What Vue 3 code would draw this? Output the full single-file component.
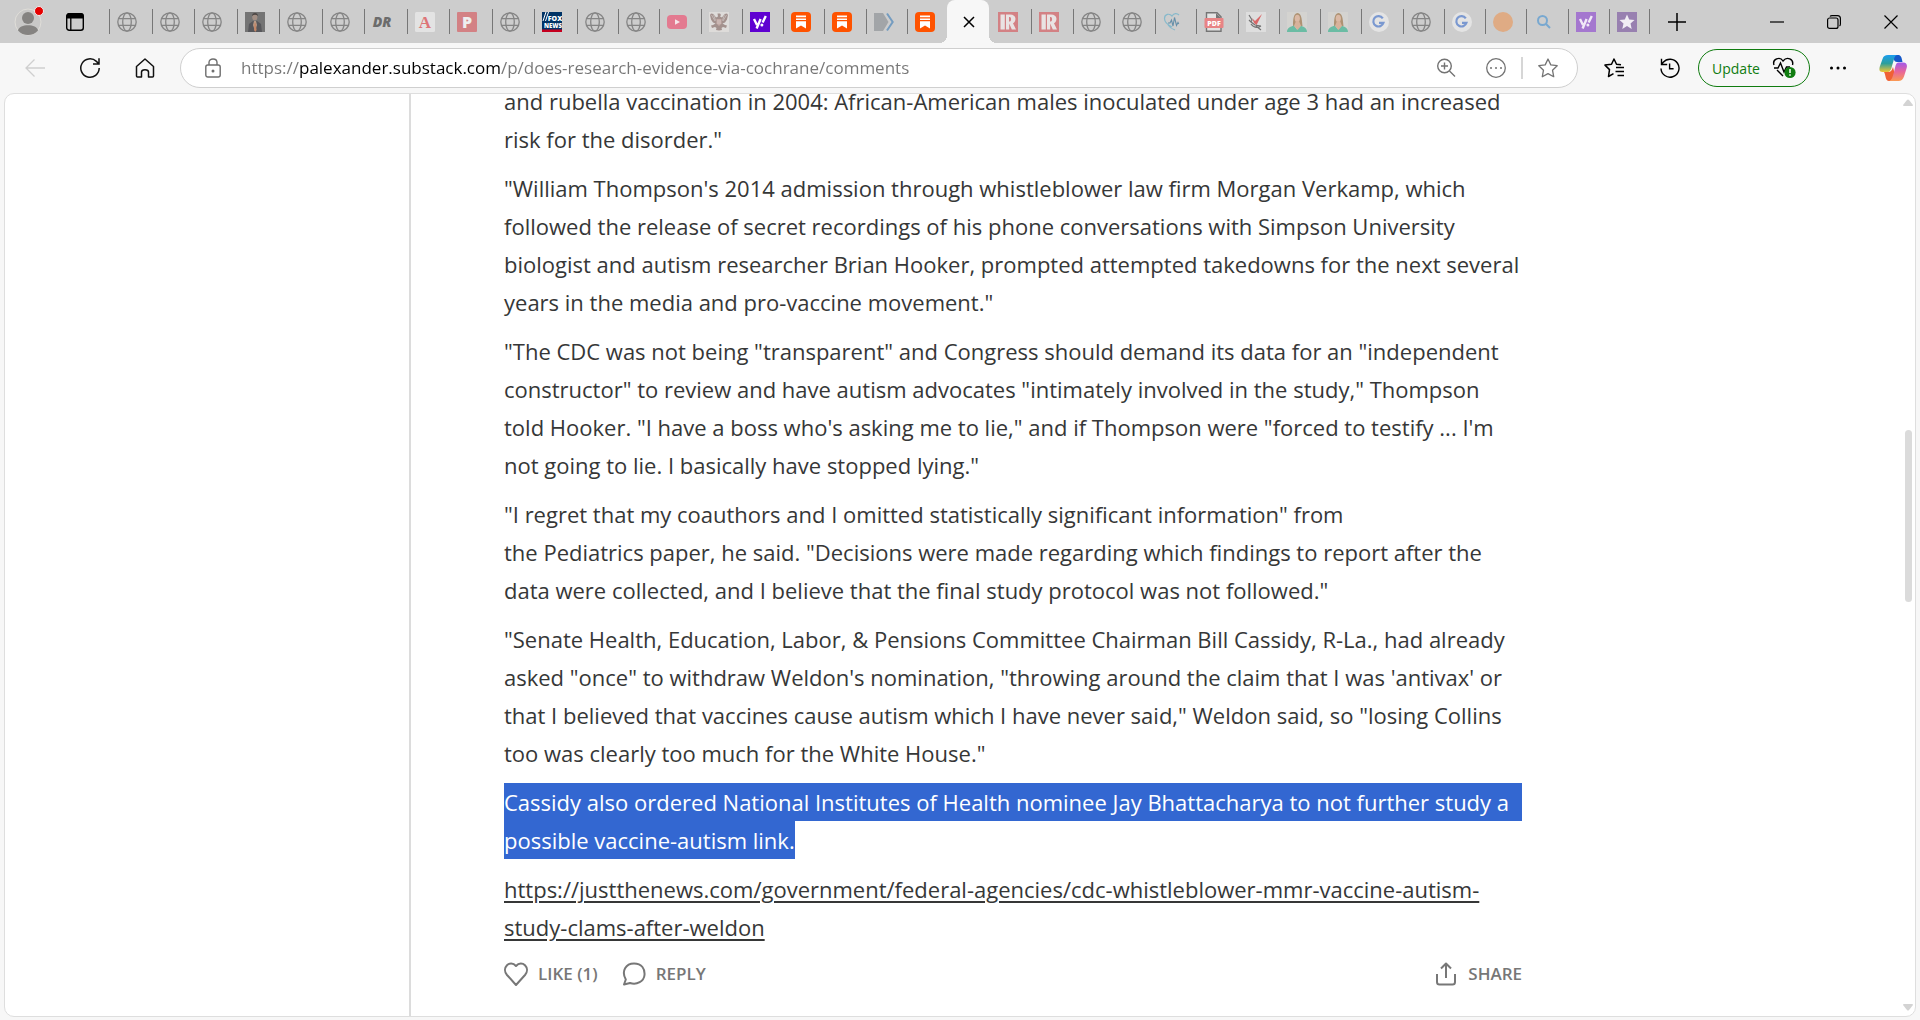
<template>
  <div class="browser">
    <svg class="sprite" aria-hidden="true">
      <symbol id="globe" viewBox="0 0 20 20">
        <g fill="none" stroke="#858585" stroke-width="1.3">
          <circle cx="10" cy="10" r="9.2" />
          <ellipse cx="10" cy="10" rx="4.3" ry="9.2" />
          <path d="M1.6 6.7h16.8M1.6 13.3h16.8" />
        </g>
      </symbol>
      <symbol id="man" viewBox="0 0 20 20">
        <path fill="#747474" d="M0 0h20v20H0z" />
        <path fill="#57575b" d="M3 20l1-8 4-3h4l4 3 1 8z" />
        <path fill="#b99a86" d="M9 9h2l1 4-2 6-2-6z" />
        <path fill="#c38666" d="M9.6 11h1l1 7-1.4 2L9 18z" />
        <ellipse cx="9.8" cy="5" rx="2.6" ry="3.6" fill="#a38f84" />
        <path fill="#4a4543" d="M7 4c0-4 6-4 6 0-2-1.6-4-1.6-6 0z" />
      </symbol>
      <symbol id="letter-a" viewBox="0 0 20 20">
        <rect width="20" height="20" rx="1.5" fill="#e3e3e3" />
      </symbol>
      <symbol id="letter-p" viewBox="0 0 20 20">
        <rect width="20" height="20" rx="1" fill="#d38184" />
      </symbol>
      <symbol id="fox" viewBox="0 0 20 20">
        <path fill="#003366" d="M0 0h20v18H0z" />
        <path fill="#c5001f" d="M0 17.5h20V20H0z" />
        <path stroke="#fff" d="M1 9l3-9M3.500 9l3-9" />
      </symbol>
      <symbol id="youtube" viewBox="0 0 20 20">
        <rect y="3" width="20" height="14" rx="4" fill="#e37a90" />
        <path fill="#f6e6ea" d="M8 7.200v5.600l5-2.800z" />
      </symbol>
      <symbol id="eagle" viewBox="0 0 20 20">
        <path fill="#dedcda" d="M0 0h20v20H0z" />
        <path fill="#a3918d" d="M8.500 1.500H11l1 1.500-1 1.500 2 1L15.500 2 18 1.500l1 1.500-1 4.500-2 3-2.500 1L16 13l2 .5-1 2.500-3-1-1.500 1 .5 2-3 .5-3-.5.5-2L6 15l-3 1-1-2.500 2-.5 2.500-1.500-2.500-1-2-3L1 3l1-1.500L4.500 2 7 5.500l2-1z" />
        <path fill="#c3aaa5" d="M7.500 7h5v4.500L10 14l-2.500-2.500z" />
        <path stroke="#d8d4d1" stroke-width=".6" d="M2.500 3l3.500 6M4.500 2.500l2 6M17.500 3L14 9M15.500 2.500l-2 6M9 8v4M11 8v4" />
      </symbol>
      <symbol id="yahoo" viewBox="0 0 20 20">
        <path fill="#5f01d1" d="M0 0h20v20H0z" />
        <path stroke="#fff" stroke-width="2.400" fill="none" d="M4 7l3 6M10.600 7l-4 9.500M15.800 4l-3.200 6.500" />
        <circle cx="11.900" cy="13" r="1.500" fill="#fff" />
      </symbol>
      <symbol id="yahoo-faded" viewBox="0 0 20 20">
        <path fill="#a477cf" d="M0 0h20v20H0z" />
        <path stroke="#f1e9f7" stroke-width="2.400" fill="none" d="M4 7l3 6M10.600 7l-4 9.500M15.800 4l-3.200 6.500" />
        <circle cx="11.900" cy="13" r="1.500" fill="#f1e9f7" />
      </symbol>
      <symbol id="substack" viewBox="0 0 20 20">
        <rect width="20" height="20" rx="4" fill="#ff5300" />
        <path fill="#fff" d="M5 3.600h10v1.600H5zM5 6.400h10V8H5zM5 9.200h10v7.400l-5-3-5 3z" />
      </symbol>
      <symbol id="chevrons" viewBox="0 0 20 20">
        <path fill="#a2a5a8" d="M0 1h9l5.500 9L9 19H0z" />
        <path fill="none" stroke="#749cc0" stroke-width="2" d="M13 1.500l5.700 8.500-5.700 8.500" />
      </symbol>
      <symbol id="realtor" viewBox="0 0 20 20">
        <path fill="#d38184" d="M0 0h20v20H0z" />
        <path fill="#e9e3e3" d="M2.500 2.500h4.300v15H2.500zM8 2.500h4c7 0 6.500 7.200 3 8.700l3 6.300h-4.200l-2.600-6v6H8z" />
        <path fill="#d38184" d="M11 5h.8c1.700 0 1.700 4.500 0 4.500H11z" />
      </symbol>
      <symbol id="health" viewBox="0 0 20 20">
        <path fill="none" stroke="#86b9cb" stroke-width="1.200" d="M9 15C3 12 1.500 9 1.500 6.500c0-4.500 5-5.500 7.500-2.500 2-3 5-3 7-1M5 13c2 3 4 4 7 5" />
        <path fill="none" stroke="#658fa9" stroke-width="1.100" d="M5 11h2l1.500-3 1.500 6 1.500-8.500 2 8 1.500-3 .8 1.500" />
      </symbol>
      <symbol id="pdf" viewBox="0 0 20 20">
        <path fill="#e4e4e4" stroke="#757575" stroke-width="1.400" d="M2.500.800H13l4 4v14.400H2.500z" />
        <path fill="#757575" d="M12 1v5h5z" />
        <rect x=".5" y="6" width="19" height="10" rx="1" fill="#e88485" />
      </symbol>
      <symbol id="bird" viewBox="0 0 20 20">
        <path fill="#dedede" d="M0 0h20v20H0z" />
        <path fill="#d96667" d="M6 6l3 3 7-7-5.500 11L8 11z" />
        <path fill="none" stroke="#737373" stroke-width="1.200" d="M3 3l3 5-1 2 4 3 6 1M5 12c3 4 7 4 10 2M10 14l5 4M3 8l2 2" />
      </symbol>
      <symbol id="woman" viewBox="0 0 20 20">
        <path fill="#d4d3d0" d="M0 0h20v20H0z" />
        <path fill="#ae9273" d="M6 14c0-4 0-13 4.500-13S15 10 15.500 14z" />
        <path fill="#6bbca4" d="M0 20c0-4 3-5.500 7-6.500l3 4 3-4c4 1 7 2.500 7 6.500z" />
        <ellipse cx="10.300" cy="6.500" rx="2.600" ry="3.700" fill="#dbb9a5" />
        <path fill="#d7b29b" d="M9 9h3l2 5-3.500 4L7 14z" />
      </symbol>
      <symbol id="google" viewBox="0 0 20 20">
        <circle cx="10" cy="10" r="10" fill="#e4e4e4" />
        <path fill="none" stroke="#7a98d0" stroke-width="2.200" d="M13.800 6.300A5.200 5.200 0 1 0 14.500 10.800H10" />
      </symbol>
      <symbol id="dot" viewBox="0 0 20 20"><circle cx="10" cy="10" r="10" fill="#dfab84" /></symbol>
      <symbol id="search" viewBox="0 0 20 20">
        <path fill="none" stroke="#78a8d0" stroke-width="2" d="M12 12l4 4M13 8.500a4.500 4.500 0 1 1-9 0 4.500 4.500 0 0 1 9 0z" />
      </symbol>
      <symbol id="purple-star" viewBox="0 0 20 20">
        <path fill="#9880b0" d="M0 0h20v20H0z" />
        <path fill="#f1edf4" d="M10 2.500l2.200 5 5.300.5-4 3.600 1.200 5.400-4.700-2.900L5.300 17l1.200-5.400-4-3.600 5.300-.5z" />
      </symbol>
    </svg>

    <header class="tabstrip">
      <button type="button" class="profile" aria-label="Profile">
        <svg width="28" height="28" viewBox="0 0 28 28">
          <circle cx="14" cy="14" r="13" fill="#c9c8c7" stroke="#e0ded9" />
          <circle cx="14" cy="10" r="6" fill="#858381" />
          <path fill="#858381" d="M4 22.500c1-7 19-7 20 0-5 6-15 6-20 0z" />
        </svg>
        <span class="profile-dot"></span>
      </button>
      <button type="button" class="workspaces" aria-label="Tab actions">
        <svg width="20" height="20" viewBox="0 0 20 20">
          <rect x="1.700" y="1.700" width="16.600" height="16.600" rx="2.500" fill="none" stroke="#000" stroke-width="1.400" />
          <path d="M1.500 6.500V4a3 3 0 0 1 3-3h11a3 3 0 0 1 3 3v2.500z" />
          <path stroke="#000" stroke-width="1.300" d="M5.800 6v12" />
        </svg>
      </button>

      <nav class="tabs" aria-label="Open tabs">
        <button
          v-for="(tab, i) in tabs"
          :key="i"
          type="button"
          class="tab"
          :class="{ 'tab-wide': i < 11, 'tab-active': tab === 'active', 'tab-plain': tabs[i - 1] === 'active' }"
          :aria-label="tab"
        >
          <svg v-if="tab === 'active'" width="12" height="12" viewBox="0 0 12 12">
            <path stroke="#000" stroke-width="1.500" d="M1 1l10 10M11 1L1 11" />
          </svg>
          <svg v-else class="favicon" width="20" height="20" viewBox="0 0 20 20">
            <use :href="'#' + tab" />
            <text
              v-for="mark in marks[tab]"
              :key="mark.text"
              :x="mark.x"
              :y="mark.y"
              :font-size="mark.size"
              :fill="mark.fill"
              :class="mark.kind"
              text-anchor="middle"
            >{{ mark.text }}</text>
          </svg>
        </button>
      </nav>

      <button type="button" class="new-tab" aria-label="New tab">
        <svg width="18" height="18" viewBox="0 0 18 18"><path stroke="#000" stroke-width="1.500" d="M9 0v18M0 9h18" /></svg>
      </button>
      <div class="window-controls">
        <button type="button" aria-label="Minimize">
          <svg width="14" height="14" viewBox="0 0 14 14"><path stroke="#000" stroke-width="1.200" d="M0 7h14" /></svg>
        </button>
        <button type="button" aria-label="Restore">
          <svg width="14" height="14" viewBox="0 0 14 14" fill="none" stroke="#000" stroke-width="1.200">
            <rect x=".6" y="3" width="10.400" height="10.400" rx="2" />
            <path d="M3 1.500C3.500.8 4 .6 5 .6h5.500c2 0 2.900 1 2.900 2.900V9c0 1-.2 1.500-.9 2" />
          </svg>
        </button>
        <button type="button" aria-label="Close">
          <svg width="14" height="14" viewBox="0 0 14 14"><path stroke="#000" stroke-width="1.200" d="M.5.500l13 13M13.500.500l-13 13" /></svg>
        </button>
      </div>
    </header>

    <div class="toolbar">
      <div class="nav-buttons">
        <button type="button" aria-label="Back" disabled>
          <svg width="20" height="20" viewBox="0 0 20 20" fill="none" stroke="#cfcfcf" stroke-width="1.300"><path d="M20 10H1M9.500 1.500L1 10l8.500 8.500" /></svg>
        </button>
        <button type="button" aria-label="Refresh">
          <svg width="22" height="22" viewBox="0 0 22 22" fill="none" stroke="#111" stroke-width="1.500"><path d="M20.200 11a9.200 9.200 0 1 1-2.800-6.600L20 7M20 1.200V7h-6" /></svg>
        </button>
        <button type="button" aria-label="Home">
          <svg width="20" height="20" viewBox="0 0 20 20" fill="none" stroke="#111" stroke-width="1.500"><path d="M1.500 8.500L10 1l8.500 7.500V18q0 1-1 1h-4v-5c0-3-7-3-7 0v5h-4q-1 0-1-1z" stroke-linejoin="round" /></svg>
        </button>
      </div>

      <div class="address">
        <button type="button" aria-label="View site information">
          <svg width="16" height="20" viewBox="0 0 16 20" fill="none" stroke="#6e6e6e" stroke-width="1.400">
            <rect x=".8" y="7" width="14.400" height="12" rx="2" />
            <path d="M4 7V4.500C4-.2 12-.2 12 4.500V7" />
            <circle cx="8" cy="13" r=".8" fill="#6e6e6e" />
          </svg>
        </button>
        <input v-model="url" class="address-input" type="text" aria-label="Address" spellcheck="false" />
        <div class="address-actions">
          <button type="button" aria-label="Zoom">
            <svg width="20" height="20" viewBox="0 0 20 20" fill="none" stroke="#737373" stroke-width="1.400"><circle cx="8.500" cy="8" r="6.800" /><path d="M13.500 13l5.500 5.500M8.500 4.500v7M5 8h7" /></svg>
          </button>
          <button type="button" aria-label="Page actions">
            <svg width="20" height="20" viewBox="0 0 20 20"><circle cx="10" cy="10" r="9.300" fill="none" stroke="#737373" stroke-width="1.300" /><path stroke="#737373" stroke-width="2" stroke-linecap="round" d="M5 10h.01M10 10h.01M15 10h.01" /></svg>
          </button>
          <span class="address-sep"></span>
          <button type="button" aria-label="Add to favorites">
            <svg width="20" height="20" viewBox="0 0 20 20" fill="none" stroke="#737373" stroke-width="1.300" stroke-linejoin="round"><path d="M10 1l2.800 5.900 6.400.8-4.700 4.500 1.200 6.500L10 15.600l-5.700 3.100 1.200-6.500L.8 7.700l6.400-.8z" /></svg>
          </button>
        </div>
      </div>

      <div class="toolbar-actions">
        <button type="button" aria-label="Favorites">
          <svg width="20" height="20" viewBox="0 0 20 20" fill="none" stroke="#000" stroke-width="1.500" stroke-linejoin="round"><path d="M17 6.800l-4.500-.6L10 1 7.500 6.200l-6.500.9 4.500 4.500-1 6.900 5-2.800M12 9.500h8M11.500 13.500H20M13.500 17.500H20" /></svg>
        </button>
        <button type="button" aria-label="History">
          <svg width="20" height="20" viewBox="0 0 20 20" fill="none" stroke="#000" stroke-width="1.400"><path d="M1 10.500a9 9 0 1 0 2.200-6.200L1.500 6.500M1.500.8v5.700h5.700M9.600 5.500v5.300h4" /></svg>
        </button>
        <button type="button" class="update">
          Update
          <svg width="24" height="22" viewBox="0 0 24 22">
            <path fill="none" stroke="#000" stroke-width="1.400" d="M2 8c-2-6 6-9 9-4 4-5 11-2 9.500 4M2 11h4l2.500-5 3.500 9 2.500-5H18M5 13l6 6" />
            <circle cx="18" cy="15.500" r="5.600" fill="#107c10" />
            <path stroke="#fff" stroke-width="1.500" d="M18 12v4M18 17.300v1.500" />
          </svg>
        </button>
        <button type="button" aria-label="Settings and more">
          <svg width="18" height="6" viewBox="0 0 18 6"><path stroke="#000" stroke-width="3" stroke-linecap="round" d="M2.500 3h.01M9 3h.01M15.500 3h.01" /></svg>
        </button>
        <button type="button" class="copilot" aria-label="Copilot">
          <svg width="28" height="28" viewBox="0 0 28 28">
            <defs>
              <linearGradient id="cp-a" x1="0" y1="0" x2="0" y2="1"><stop offset="0" stop-color="#1a9df0" /><stop offset=".5" stop-color="#2d9f9b" /><stop offset="1" stop-color="#f1c632" /></linearGradient>
              <linearGradient id="cp-b" x1="0" y1="0" x2="0" y2="1"><stop offset="0" stop-color="#a15aeb" /><stop offset=".5" stop-color="#e8669b" /><stop offset="1" stop-color="#fb9a52" /></linearGradient>
            </defs>
            <path fill="#1558c9" d="M15 1h4c3 0 3.500 2 4.500 7H18c-3 0-3-3-4-6z" />
            <path fill="url(#cp-a)" d="M9 1h9c-3 1-3 5-5 11-1 4-2 6-5 6H3.500C0 18 0 15 1 12l2.500-7C4.500 2 6 1 9 1z" />
            <path fill="#f06135" d="M5 18h4c3 0 4-2 5-5l2 8c-1 3-2 6-4 6h-2c-4 0-3-6-5-9z" />
            <path fill="url(#cp-b)" d="M19.500 8.500H24c4 0 4.500 3 3.500 6l-2.500 8c-1 3-3 4.500-5.500 4.500H10c3-1 4-5 5.500-11 1-4 1.500-7.500 4-7.500z" />
          </svg>
        </button>
      </div>
    </div>

    <div class="viewport">
      <aside class="rail"></aside>
      <main class="page">
        <article class="comment">
          <p v-for="(lines, i) in paragraphs" :key="i">
            <span v-for="line in lines" :key="line" class="line">{{ line }}</span>
          </p>
          <p>
            <span v-for="line in selected" :key="line" class="line"><mark>{{ line }}</mark></span>
          </p>
          <p>
            <a href="#source"><span v-for="line in source" :key="line" class="line">{{ line }}</span></a>
          </p>
          <footer class="comment-actions">
            <button type="button">
              <svg width="24" height="24" viewBox="0 0 24 24"><path d="M12 23L3 13C-3 6 6-3 12 4c6-7 15 2 9 9z" /></svg>
              LIKE (1)
            </button>
            <button type="button">
              <svg width="24" height="24" viewBox="0 0 24 24"><path d="M2 22.500l1.800-5C-1 9 4 1.500 12 1.500S23 7 22.500 13 15 23.500 8 21z" /></svg>
              REPLY
            </button>
            <button type="button" class="share">
              <svg width="24" height="24" viewBox="0 0 24 24"><path d="M3 12v8q0 2.500 2.500 2.500h13Q21 22.500 21 20v-8M12 16V1.500M7 6.500l5-5 5 5" /></svg>
              SHARE
            </button>
          </footer>
        </article>
      </main>
      <div class="scrollbar" aria-hidden="true">
        <svg width="10" height="8" viewBox="0 0 10 8"><path fill="#d3d3d3" d="M4 1q1-1 2 0l4 5q0 1-1 1H1q-1 0-1-1z" /></svg>
        <div class="scroll-track"><div class="scroll-thumb" :style="{ top: scroll.top, height: scroll.height }"></div></div>
        <svg width="10" height="8" viewBox="0 0 10 8"><path fill="#d3d3d3" d="M4 7q1 1 2 0l4-5q0-1-1-1H1Q0 1 0 2z" /></svg>
      </div>
    </div>
  </div>
</template>

<script setup>
import { ref } from 'vue'

const url = ref('https://palexander.substack.com/p/does-research-evidence-via-cochrane/comments')

const tabs = [
  'globe', 'globe', 'globe', 'man', 'globe', 'globe', 'drudge', 'letter-a', 'letter-p', 'globe', 'fox',
  'globe', 'globe', 'youtube', 'eagle', 'yahoo', 'substack', 'substack', 'chevrons', 'substack',
  'active',
  'realtor', 'realtor', 'globe', 'globe', 'health', 'pdf', 'bird', 'woman', 'woman', 'google', 'globe',
  'google', 'dot', 'search', 'yahoo-faded', 'purple-star'
]

// lettering that sits on top of some favicons
const marks = {
  drudge: [{ text: 'DR', x: 10, y: 15, size: 14, fill: '#6c6c6c', kind: 'mark-slanted' }],
  'letter-a': [{ text: 'A', x: 10, y: 16, size: 17, fill: '#dd7477', kind: 'mark-serif' }],
  'letter-p': [{ text: 'P', x: 10, y: 16, size: 16, fill: '#eeeeee', kind: 'mark' }],
  fox: [
    { text: 'FOX', x: 13, y: 9, size: 7, fill: '#ffffff', kind: 'mark' },
    { text: 'NEWS', x: 11, y: 16, size: 6, fill: '#ffffff', kind: 'mark' }
  ],
  pdf: [{ text: 'PDF', x: 10, y: 14, size: 7, fill: '#ffffff', kind: 'mark' }]
}

const scroll = { top: '36%', height: '19.2%' }

const paragraphs = [
  [
    'and rubella vaccination in 2004: African-American males inoculated under age 3 had an increased',
    'risk for the disorder."'
  ],
  [
    '"William Thompson\'s 2014 admission through whistleblower law firm Morgan Verkamp, which',
    'followed the release of secret recordings of his phone conversations with Simpson University',
    'biologist and autism researcher Brian Hooker, prompted attempted takedowns for the next several',
    'years in the media and pro-vaccine movement."'
  ],
  [
    '"The CDC was not being "transparent" and Congress should demand its data for an "independent',
    'constructor" to review and have autism advocates "intimately involved in the study," Thompson',
    'told Hooker. "I have a boss who\'s asking me to lie," and if Thompson were "forced to testify ... I\'m',
    'not going to lie. I basically have stopped lying."'
  ],
  [
    '"I regret that my coauthors and I omitted statistically significant information" from',
    'the Pediatrics paper, he said. "Decisions were made regarding which findings to report after the',
    'data were collected, and I believe that the final study protocol was not followed."'
  ],
  [
    '"Senate Health, Education, Labor, & Pensions Committee Chairman Bill Cassidy, R-La., had already',
    'asked "once" to withdraw Weldon\'s nomination, "throwing around the claim that I was \'antivax\' or',
    'that I believed that vaccines cause autism which I have never said," Weldon said, so "losing Collins',
    'too was clearly too much for the White House."'
  ]
]

const selected = [
  'Cassidy also ordered National Institutes of Health nominee Jay Bhattacharya to not further study a',
  'possible vaccine-autism link.'
]

const source = [
  'https://justthenews.com/government/federal-agencies/cdc-whistleblower-mmr-vaccine-autism-',
  'study-clams-after-weldon'
]
</script>

<style>
body {
  background: #f7f7f7;
}
</style>

<style scoped>
.browser {
  display: flex;
  flex-direction: column;
  height: 100vh;
  overflow: hidden;
  background: #f7f7f7;
  color: #363737;
  font-family: "Open Sans", "Noto Sans", sans-serif;
}

.sprite {
  position: absolute;
  width: 0;
  height: 0;
}

.mark,
.mark-slanted,
.mark-serif {
  font-weight: 800;
}

.mark-slanted {
  font-style: italic;
}

.mark-serif {
  font-family: "Liberation Serif", serif;
}

button {
  display: flex;
  align-items: center;
  justify-content: center;
  padding: 0;
  border: 0;
  background: none;
  color: inherit;
  font: inherit;
}

svg {
  display: block;
  flex: none;
}

.tabstrip {
  display: flex;
  flex: none;
  height: 43px;
  background: #cdcdcd;
}

.profile {
  position: relative;
  width: 56px;
}

.profile-dot {
  position: absolute;
  top: 6px;
  right: 12px;
  width: 8px;
  height: 8px;
  border: 1px solid #eee;
  border-radius: 50%;
  background: #e60000;
}

.workspaces {
  width: 38px;
  margin-right: 14px;
}

.tabs {
  display: flex;
  flex: 1;
}

.tab {
  position: relative;
  flex: 32 1 0;
  min-width: 0;
  justify-content: flex-start;
}

.tab-wide {
  flex-grow: 33;
}

.favicon {
  margin-left: 9px;
}

.tab::before,
.tabs::after {
  content: "";
  width: 1px;
  height: 25px;
  background: #777;
}

.tab::before {
  position: absolute;
  left: 1px;
  top: 9px;
}

.tabs::after {
  margin-top: 9px;
}

.tab-plain::before {
  display: none;
}

.tab-active {
  padding-left: 16px;
  border-radius: 8px 8px 0 0;
  background: #f7f7f7;
}

/* the two concave corners at the foot of the active tab */
.tab-active::before,
.tab-active::after {
  content: "";
  position: absolute;
  top: auto;
  bottom: 0;
  width: 8px;
  height: 8px;
}

.tab-active::before {
  left: -8px;
  background: radial-gradient(circle at 0 0, transparent 8px, #f7f7f7 8px);
}

.tab-active::after {
  right: -8px;
  background: radial-gradient(circle at 100% 0, transparent 8px, #f7f7f7 8px);
}

.tab-active {
  flex: none;
  box-sizing: border-box;
  width: 42px;
}

.new-tab {
  width: 54px;
}

.window-controls {
  display: flex;
  padding: 0 1px 0 44px;
}

.window-controls button {
  width: 57px;
}

.toolbar {
  display: flex;
  align-items: center;
  flex: none;
  height: 50px;
}

.nav-buttons {
  display: flex;
  padding: 0 8px 0 7px;
}

.nav-buttons button {
  width: 55px;
  height: 40px;
}

.address {
  display: flex;
  align-items: center;
  flex: 1;
  box-sizing: border-box;
  height: 40px;
  padding: 0 19px 0 24px;
  border: 1px solid #cfcfcf;
  border-radius: 20px;
  background: #fff;
}

.address-input {
  flex: 1;
  min-width: 0;
  margin-left: 20px;
  padding: 0;
  border: 0;
  outline: 0;
  color: #767676;
  font: 17px/24px "Open Sans", sans-serif;
  /* host name reads darker than the rest of the URL */
  background: linear-gradient(90deg, #767676 58px, #000 58px, #000 260px, #767676 260px);
  background-clip: text;
  -webkit-text-fill-color: transparent;
}

.address-actions {
  display: flex;
  align-items: center;
}

.address-actions button {
  width: 20px;
}

.address-actions button + button {
  margin-left: 30px;
}

.address-sep {
  width: 2px;
  height: 22px;
  margin: 0 15px;
  background: #d6d6d6;
}

.toolbar-actions {
  display: flex;
  align-items: center;
  padding-left: 8px;
}

.toolbar-actions button {
  width: 56px;
}

.toolbar-actions .update {
  gap: 12px;
  box-sizing: border-box;
  width: 112px;
  height: 38px;
  border: 1px solid #107c10;
  border-radius: 19px;
  color: #107c10;
  font-size: 14px;
}

.toolbar-actions .copilot {
  width: 54px;
}

.viewport {
  display: flex;
  flex: 1;
  min-height: 0;
  margin: 0 4px 3px;
  overflow: hidden;
  border: 1px solid #dedede;
  border-radius: 10px;
  background: #fff;
}

.rail {
  flex: none;
  width: 404px;
  border-right: 2px solid #dcdcdc;
}

.page {
  flex: 1;
  min-width: 0;
  padding-left: 93px;
}

.comment {
  max-width: 1018px;
  margin-top: -12px;
  font-size: 22px;
  line-height: 38px;
}

.comment p {
  margin: 0 0 11px;
}

.line {
  display: block;
  white-space: nowrap;
}

.comment a {
  color: inherit;
  text-decoration: underline;
  text-decoration-thickness: 2px;
  text-underline-offset: 3px;
}

mark {
  display: inline-block;
  background: #3367d1;
  color: #fff;
}

.line:first-child mark {
  display: block;
}

.comment-actions {
  display: flex;
  gap: 24px;
  padding-top: 5px;
  color: #777;
  font-size: 17px;
  font-weight: 600;
  line-height: 24px;
}

.comment-actions button {
  gap: 10px;
}

.comment-actions svg {
  fill: none;
  stroke: #777;
  stroke-width: 2;
  stroke-linejoin: round;
}

.comment-actions .share {
  margin-left: auto;
}

.scrollbar {
  display: flex;
  flex-direction: column;
  align-items: center;
  flex: none;
  width: 14px;
  padding: 5px 0;
}

.scroll-track {
  position: relative;
  flex: 1;
  width: 7px;
}

.scroll-thumb {
  position: absolute;
  width: 7px;
  border-radius: 4px;
  background: #dbdbdb;
}
</style>
